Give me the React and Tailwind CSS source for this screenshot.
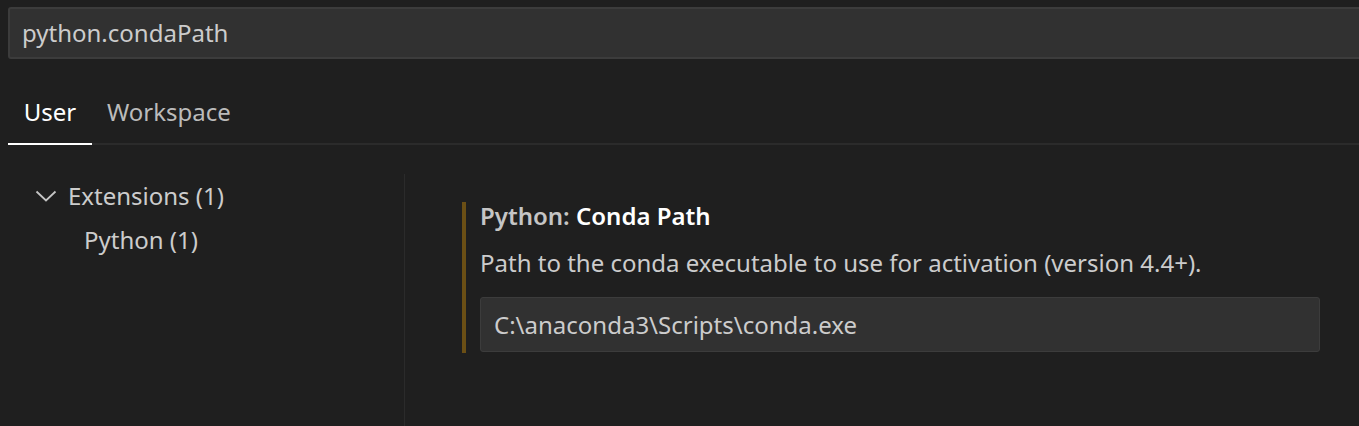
import React from 'react'

function Chevron() {
  return (
    <svg width="22" height="12" viewBox="0 0 22 12" fill="none" className="shrink-0">
      <path d="M1.5 1.5 L11 10.5 L20.5 1.5" stroke="#c5c5c5" strokeWidth="1.8" />
    </svg>
  )
}

export default function App() {
  return (
    <div
      className="w-[1359px] h-[426px] overflow-hidden bg-[#1f1f1f] text-[#cccccc]"
      style={{ fontFamily: '"Noto Sans", "Open Sans", sans-serif' }}
    >
      {/* search box */}
      <div className="pt-[7px] pl-[8px]">
        <div className="w-[1370px] h-[52px] border-2 border-[#3c3c3c] bg-[#313131] rounded-[3px] flex items-center pl-[12px] text-[24px] leading-[32px] text-[#cccccc]">
          python.condaPath
        </div>
      </div>

      {/* tabs */}
      <div className="ml-[8px] h-[86px] flex border-b-2 border-[#2b2b2b]">
        <div className="relative w-[84px] h-full flex items-center justify-center pt-[22px] text-[24px] text-white">
          User
          <div className="absolute left-0 right-0 bottom-[-2px] h-[2px] bg-white" />
        </div>
        <div className="h-full flex items-center pl-[15px] pt-[22px] text-[24px] text-[#bbbbbb]">Workspace</div>
      </div>

      {/* body */}
      <div className="flex">
        <div className="w-[405px] shrink-0 pt-[29px]">
          <div className="border-r border-[#2b2b2b] h-[260px]">
            <div className="h-[44px] flex items-center gap-[11px] pl-[35px] text-[24px] leading-[32px] text-[#cccccc]">
              <Chevron />
              <span>Extensions (1)</span>
            </div>
            <div className="h-[44px] flex items-center pl-[84px] text-[24px] leading-[32px] text-[#cccccc]">Python (1)</div>
          </div>
        </div>

        <div className="pl-[57px] pt-[59px]">
          <div className="border-l-4 border-[#6b4f15] pl-[14px] w-[858px] pb-px">
            <div className="text-[24px] font-semibold leading-[28px] -mt-[2px]">
              <span className="text-[#c5c5c5]">Python: </span>
              <span className="text-white">Conda Path</span>
            </div>
            <div className="mt-[17px] text-[24px] leading-[32px] text-[#cccccc]">
              Path to the conda executable to use for activation (version 4.4+).
            </div>
            <div className="mt-[18px] h-[55px] bg-[#313131] border border-[#3c3c3c] rounded-[3px] flex items-center pl-[13px] text-[24px] text-[#cccccc]">
              C:\anaconda3\Scripts\conda.exe
            </div>
          </div>
        </div>
      </div>
    </div>
  )
}
